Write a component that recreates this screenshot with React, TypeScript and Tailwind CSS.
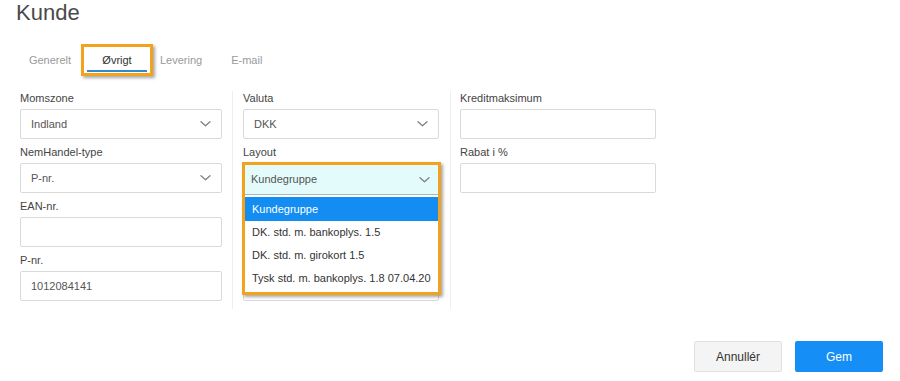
import React from "react";

const Chevron = () => (
  <svg width="11" height="6" viewBox="0 0 11 6" fill="none">
    <path d="M1 0.8l4.5 4 4.5-4" stroke="#808080" strokeWidth="1.3" strokeLinecap="round" strokeLinejoin="round" />
  </svg>
);

function Field({ label, value, select }: { label: string; value?: string; select?: boolean }) {
  return (
    <div className="flex flex-col">
      <div className="h-[14px] leading-[14px] text-[11px] text-[#444] mb-[4px]">{label}</div>
      <div className="h-[30px] border border-[#d9d9d9] rounded-[2px] bg-white flex items-center justify-between pl-[10px] pr-[10px] text-[11px] text-[#555]">
        <span>{value}</span>
        {select && <Chevron />}
      </div>
    </div>
  );
}

export default function App() {
  return (
    <div className="w-[900px] h-[381px] bg-white overflow-hidden" style={{ fontFamily: '"Liberation Sans", Arial, sans-serif' }}>
      <div className="pl-[16px] text-[22px] leading-[26px] text-[#4a4a4a]">Kunde</div>

      <div className="flex items-center mt-[18px] ml-[20px] h-[32px] text-[11px]">
        <div className="w-[60px] text-center text-[#9a9a9a]">Generelt</div>
        <div className="ml-[1px] w-[72px] h-[32px] border-[3px] border-[#f2a21c] shadow-[2px_2px_3px_rgba(0,0,0,0.35)] flex flex-col items-center justify-center relative">
          <span className="text-[#333]">Øvrigt</span>
          <div className="absolute left-[3px] right-[3px] bottom-[1px] h-[2px] bg-[#2f8bd0]" />
        </div>
        <div className="ml-[7px] text-[#9a9a9a]">Levering</div>
        <div className="ml-[29px] text-[#9a9a9a]">E-mail</div>
      </div>

      <div className="flex mt-[15px] pl-[20px]">
        <div className="w-[202px] flex flex-col gap-[6px] pb-[8px]">
          <Field label="Momszone" value="Indland" select />
          <Field label="NemHandel-type" value="P-nr." select />
          <Field label="EAN-nr." />
          <Field label="P-nr." value="1012084141" />
        </div>
        <div className="w-px bg-[#eeeeee] mx-[10px]" />
        <div className="w-[196px] flex flex-col gap-[6px]">
          <Field label="Valuta" value="DKK" select />
          <div className="relative">
            <Field label="Layout" select />
            <div className="absolute left-[-1px] top-[17px] w-[199px] h-[133px] border-[3px] border-[#f2a21c] bg-white shadow-[2px_2px_3px_rgba(0,0,0,0.35)] z-10 flex flex-col text-[11px]">
              <div className="h-[30px] bg-[#e3fbfb] border-b border-[#a9b8bd] flex items-center justify-between pl-[6px] pr-[8px] text-[#555]">
                <span>Kundegruppe</span>
                <Chevron />
              </div>
              <div className="flex flex-col pt-[2px]">
                <div className="h-[24px] bg-[#138df2] text-white flex items-center pl-[7px]">Kundegruppe</div>
                <div className="h-[23px] text-[#333] flex items-center pl-[7px]">DK. std. m. bankoplys. 1.5</div>
                <div className="h-[23px] text-[#333] flex items-center pl-[7px]">DK. std. m. girokort 1.5</div>
                <div className="h-[23px] text-[#333] flex items-center pl-[7px]">Tysk std. m. bankoplys. 1.8 07.04.20</div>
              </div>
            </div>
          </div>
          <Field label="" />
          <Field label="" />
        </div>
        <div className="w-px bg-[#eeeeee] ml-[11px] mr-[9px]" />
        <div className="w-[196px] flex flex-col gap-[6px]">
          <Field label="Kreditmaksimum" />
          <Field label="Rabat i %" />
        </div>
      </div>

      <div className="flex justify-end gap-[13px] pr-[17px] mt-[32px]">
        <button className="w-[88px] h-[31px] bg-[#f4f4f4] border border-[#e0e0e0] rounded-[2px] text-[12px] text-[#333]">Annullér</button>
        <button className="w-[88px] h-[31px] bg-[#158ff5] rounded-[2px] text-[12px] text-white">Gem</button>
      </div>
    </div>
  );
}
